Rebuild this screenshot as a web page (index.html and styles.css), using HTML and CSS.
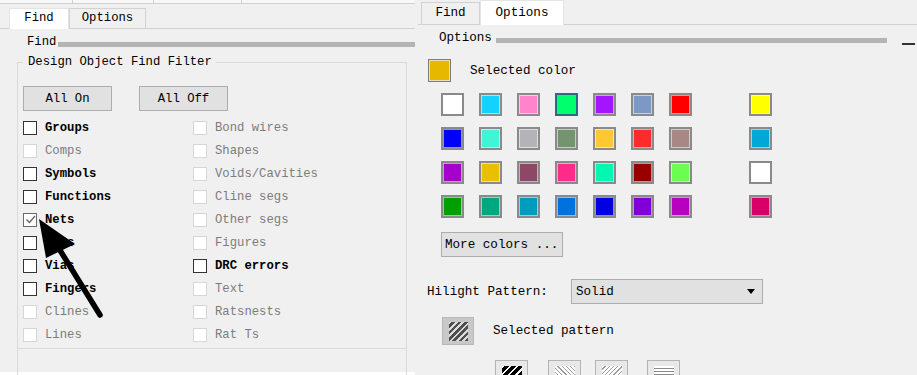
FILE: index.html
```html
<!DOCTYPE html>
<html lang="en">
<head>
    <meta charset="UTF-8">
    <meta name="viewport" content="width=device-width, initial-scale=1.0">
    <title>Find / Options</title>
    <link rel="stylesheet" href="styles.css">
</head>
<body>

<div class="screen">
    <!-- Find panel -->
    <div class="find-panel">
        <div class="top-strip"><span></span><span></span><span></span></div>
        <div class="tabs">
            <div class="tab active">Find</div>
            <div class="tab">Options</div>
        </div>
        <div class="section-head">
            <span>Find</span>
            <div class="rule"></div>
        </div>
        <fieldset class="filter">
            <legend>Design Object Find Filter</legend>
            <div class="btn-row">
                <button class="btn">All On</button>
                <button class="btn">All Off</button>
            </div>
            <div class="check-grid">
                <label class="check"><span class="box"></span>Groups</label>
                <label class="check off"><span class="box"></span>Comps</label>
                <label class="check"><span class="box"></span>Symbols</label>
                <label class="check"><span class="box"></span>Functions</label>
                <label class="check"><span class="box checked"><svg width="11" height="11" viewBox="0 0 11 11"><path d="M1.5 5.5 L4.5 8.5 L10 2" fill="none" stroke="#666" stroke-width="1.4"/></svg></span>Nets</label>
                <label class="check"><span class="box"></span>Pins</label>
                <label class="check"><span class="box"></span>Vias</label>
                <label class="check"><span class="box"></span>Fingers</label>
                <label class="check off"><span class="box"></span>Clines</label>
                <label class="check off"><span class="box"></span>Lines</label>

                <label class="check off"><span class="box"></span>Bond wires</label>
                <label class="check off"><span class="box"></span>Shapes</label>
                <label class="check off"><span class="box"></span>Voids/Cavities</label>
                <label class="check off"><span class="box"></span>Cline segs</label>
                <label class="check off"><span class="box"></span>Other segs</label>
                <label class="check off"><span class="box"></span>Figures</label>
                <label class="check"><span class="box"></span>DRC errors</label>
                <label class="check off"><span class="box"></span>Text</label>
                <label class="check off"><span class="box"></span>Ratsnests</label>
                <label class="check off"><span class="box"></span>Rat Ts</label>
            </div>
        </fieldset>
        <div class="lower-box"></div>

        <!-- annotation arrow drawn over the list -->
        <svg class="pointer" width="120" height="130" viewBox="0 0 120 130">
            <line x1="58" y1="37" x2="100" y2="105" stroke="#000" stroke-width="5.5" stroke-linecap="round"/>
            <polygon points="39,9 75,34 46,48" fill="#000"/>
        </svg>
    </div>

    <!-- Options panel -->
    <div class="options-panel">
        <div class="tabs">
            <div class="tab">Find</div>
            <div class="tab active">Options</div>
        </div>
        <div class="section-head">
            <span>Options</span>
            <div class="rule"></div>
            <div class="dash"></div>
        </div>

        <div class="selected-row">
            <span class="current-color"></span>
            <span>Selected color</span>
        </div>

        <div class="color-grid" id="color-grid"></div>

        <button class="btn more-btn">More colors ...</button>

        <div class="pattern-row">
            <span class="pattern-label">Hilight Pattern:</span>
            <div class="select">Solid<span class="caret"></span></div>
        </div>

        <div class="selected-row pattern-sel">
            <span class="current-pattern"><span></span></span>
            <span>Selected pattern</span>
        </div>

        <div class="pattern-list">
            <span class="pat"><span class="hatch-bold"></span></span>
            <span class="pat"><span class="hatch-back"></span></span>
            <span class="pat"><span class="hatch-fine"></span></span>
            <span class="pat"><span class="hatch-flat"></span></span>
        </div>
    </div>
</div>

<script>
    // palette, row by row; the last colour of each row sits in the separate column
    const palette = [
        ["#ffffff", "#14d2ff", "#ff84cc", "#00ff6c", "#a414ff", "#7c98c4", "#ff0000", "#ffff00"],
        ["#0000ff", "#40f4d8", "#b4b4b8", "#749470", "#ffc832", "#ff2a2a", "#a88884", "#00a8d8"],
        ["#a800cc", "#e8c000", "#8c4864", "#ff2a8a", "#00f8b0", "#980000", "#6aff50", "#ffffff"],
        ["#00a000", "#00a880", "#009cbc", "#0072e0", "#0000e0", "#8200d8", "#b800c0", "#d80068"]
    ];

    const grid = document.getElementById("color-grid");
    palette.forEach((row, r) => {
        row.forEach((color, c) => {
            const cell = document.createElement("span");
            cell.className = "swatch";
            if (c === 7) cell.classList.add("extra");
            if (r === 0 && c === 3) cell.classList.add("picked");
            cell.style.background = color;
            grid.appendChild(cell);
        });
    });
</script>

</body>
</html>
```

FILE: styles.css
```css
/* base */
body {
    margin: 0;
    background: #fff;
    font-family: "Liberation Mono", "DejaVu Sans Mono", monospace;
    color: #000;
}
.screen {
    display: flex;
    width: 917px;
    height: 375px;
    overflow: hidden;
}

/* tabs, shared */
.tabs {
    display: flex;
    border-bottom: 1px solid #d2d2d2;
}
.tab {
    box-sizing: border-box;
    border: 1px solid #d2d2d2;
    border-bottom: none;
    text-align: center;
    background: #f0f0f0;
}
.tab.active {
    background: #fff;
    border-color: #e4e4e4;
    margin-bottom: -1px;
}
.section-head {
    display: flex;
    align-items: center;
    height: 14px;
    line-height: 14px;
    margin-top: 6px;
}
.rule {
    flex: 1;
    height: 5px;
    margin-top: 4px;
    background: #b4b4b4;
}
.btn {
    font-family: inherit;
    font-size: inherit;
    color: #000;
    background: #e1e1e1;
    border: 1px solid #adadad;
    border-radius: 0;
    padding: 0;
}

/* find panel */
.find-panel {
    position: relative;
    width: 415px;
    height: 372px;
    background: #f0f0f0;
    font-size: 12.25px;
}
.top-strip {
    display: flex;
    height: 3px;
    background: #f8f8f8;
    border-bottom: 1px solid #d0d0d0;
}
.top-strip span {
    border-right: 1px solid #d0d0d0;
}
.top-strip span:nth-child(1) { width: 72px; }
.top-strip span:nth-child(2) { width: 80px; }
.top-strip span:nth-child(3) { width: 87px; }
.find-panel .tabs {
    margin-top: 4px;
    height: 20px;
    padding-left: 9px;
}
.find-panel .tab {
    height: 20px;
    line-height: 19px;
}
.find-panel .tab.active {
    width: 60px;
    height: 21px;
}
.find-panel .tab:nth-child(2) {
    width: 77px;
}
.find-panel .section-head {
    padding-left: 27px;
}
.find-panel .rule {
    margin-left: 2px;
}
.filter {
    box-sizing: border-box;
    width: 390px;
    margin: 6px 0 0 17px;
    padding: 17px 5px 2px 5px;
    border: 1px solid #dadada;
}
.filter legend {
    padding: 0 4px 0 5px;
    line-height: 14px;
}
.btn-row {
    display: flex;
    gap: 27px;
}
.btn-row .btn {
    width: 89px;
    height: 25px;
}
.check-grid {
    display: grid;
    grid-template-columns: 170px 170px;
    grid-template-rows: repeat(10, 23px);
    grid-auto-flow: column;
    margin-top: 5px;
}
.check {
    display: flex;
    align-items: center;
    gap: 8px;
    font-weight: bold;
}
.box {
    box-sizing: border-box;
    display: flex;
    align-items: center;
    justify-content: center;
    width: 14px;
    height: 14px;
    background: #fff;
    border: 1px solid #333;
}
.box.checked {
    border-color: #6a6a6a;
}
.check.off {
    font-weight: normal;
    color: #7c7c7c;
}
.check.off .box {
    border-color: #d6d6d6;
}
.lower-box {
    box-sizing: border-box;
    width: 390px;
    height: 30px;
    margin-left: 17px;
    border-left: 1px solid #dadada;
    border-right: 1px solid #dadada;
}
.pointer {
    position: absolute;
    left: 0;
    top: 210px;
    pointer-events: none;
}

/* options panel */
.options-panel {
    box-sizing: border-box;
    width: 502px;
    padding-left: 3px;
    background: #f0f0f0;
    font-size: 12.6px;
}
.options-panel .tabs {
    height: 24px;
    padding-left: 3px;
}
.options-panel .tab {
    width: 59px;
    height: 22px;
    margin-top: 2px;
    line-height: 21px;
}
.options-panel .tab.active {
    width: 84px;
    height: 25px;
    margin-top: 0;
    line-height: 24px;
}
.options-panel .section-head {
    padding-left: 21px;
}
.options-panel .rule {
    margin-left: 4px;
}
.dash {
    width: 13px;
    height: 2px;
    margin: 12px 2px 0 15px;
    background: #333;
}
.selected-row {
    display: flex;
    align-items: center;
    gap: 19px;
    margin-top: 14px;
    padding-left: 10px;
}
.current-color {
    box-sizing: border-box;
    width: 23px;
    height: 23px;
    background: #e6b800;
    border: 1px solid #7c7c7c;
    box-shadow: inset 0 0 0 1px #e8e0c0;
}
.color-grid {
    display: grid;
    grid-template-columns: repeat(7, 23px) 27px 23px;
    grid-auto-rows: 23px;
    column-gap: 15px;
    row-gap: 11px;
    margin-top: 11px;
    padding-left: 23px;
}
.swatch {
    box-sizing: border-box;
    border: 2px solid #8a8a8a;
    box-shadow: inset 0 0 0 1px rgba(255, 255, 255, 0.55);
}
.swatch.extra {
    grid-column: 9;
}
.swatch.picked {
    border-color: #2d6b84;
    box-shadow: none;
}
.more-btn {
    display: block;
    width: 122px;
    height: 25px;
    margin: 14px 0 0 23px;
    padding-left: 3px;
    text-align: left;
}
.pattern-row {
    display: flex;
    align-items: center;
    margin-top: 22px;
    padding-left: 9px;
}
.pattern-label {
    width: 144px;
}
.select {
    box-sizing: border-box;
    display: flex;
    align-items: center;
    justify-content: space-between;
    width: 192px;
    height: 25px;
    padding: 0 7px 0 4px;
    background: #e1e1e1;
    border: 1px solid #adadad;
}
.caret {
    width: 0;
    height: 0;
    border-left: 4.5px solid transparent;
    border-right: 4.5px solid transparent;
    border-top: 5px solid #000;
}
.pattern-sel {
    margin-top: 13px;
    padding-left: 24px;
}
.current-pattern {
    box-sizing: border-box;
    display: flex;
    align-items: center;
    justify-content: center;
    width: 32px;
    height: 28px;
    background: #c8c8c8;
    border: 1px solid #b8b8b8;
}
.current-pattern span {
    width: 19px;
    height: 19px;
    background: repeating-linear-gradient(135deg, #dcdcdc 0 2px, #505050 2px 4.5px);
}
.pattern-list {
    display: flex;
    margin-top: 15px;
    padding-left: 77px;
}
.pat {
    box-sizing: border-box;
    display: flex;
    justify-content: center;
    padding-top: 5px;
    width: 33px;
    height: 26px;
    background: #e8e8e8;
    border: 1px solid #b4b4b4;
}
.pat + .pat { margin-left: 20px; }
.pat:nth-child(3) { margin-left: 14px; }
.pat:nth-child(4) { margin-left: 19px; }
.pat span {
    width: 20px;
    height: 18px;
}
.hatch-bold {
    background: repeating-linear-gradient(135deg, #fff 0 2px, #000 2px 5px);
}
.hatch-back {
    background: repeating-linear-gradient(45deg, #fff 0 2px, #9a9a9a 2px 3px);
}
.hatch-fine {
    background: repeating-linear-gradient(135deg, #fff 0 2px, #9a9a9a 2px 3px);
}
.hatch-flat {
    background: repeating-linear-gradient(180deg, #fff 0 2px, #8a8a8a 2px 3px);
}
```
